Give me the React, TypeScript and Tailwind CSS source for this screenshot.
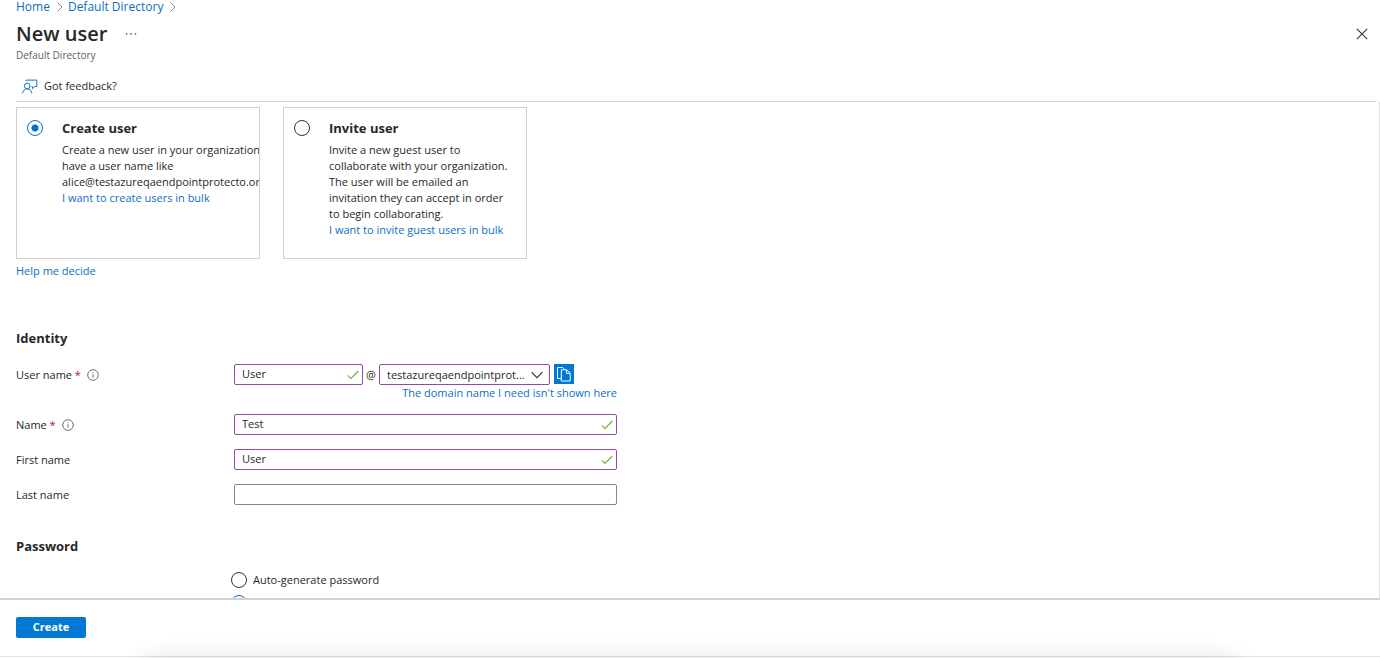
import { useState } from "react";
import type { ReactNode } from "react";

const linkClass = "text-[#0a70c2] hover:underline";

function Crumb({ children }: { children: ReactNode }) {
  return (
    <li className="flex items-center">
      <a href="#" className={linkClass}>
        {children}
      </a>
      <svg className="ml-1.5 h-2.5 w-2" viewBox="0 0 8 10" fill="none" stroke="#8a8886" aria-hidden="true">
        <path d="M1.5 .5 6 5 1.5 9.5" />
      </svg>
    </li>
  );
}

function FeedbackIcon() {
  return (
    <svg className="h-4 w-4" viewBox="0 0 16 16" fill="none" stroke="#1a73c7" strokeWidth="1" aria-hidden="true">
      <circle cx="5.2" cy="7" r="2.8" />
      <path d="M.6 14.400c.3-2.700 2.100-4.600 4.600-4.600s4.300 1.900 4.600 4.600" />
      <path d="M4.200 2.400V1.100H14.800V7.500H12.800L10.400 9.700V7.500H9.600" />
    </svg>
  );
}

function InfoIcon() {
  return (
    <svg className="h-3 w-3" viewBox="0 0 12 12" fill="none" stroke="#605e5c" strokeWidth=".9" aria-hidden="true">
      <circle cx="6" cy="6" r="5.300" />
      <path d="M6 5.200V8.800M6 3.200V4.200" />
    </svg>
  );
}

function CheckIcon() {
  return (
    <svg
      className="pointer-events-none absolute top-1.5 right-1 h-2.5 w-3"
      viewBox="0 0 12 10"
      fill="none"
      stroke="#6bb03c"
      strokeWidth="1.100"
      aria-hidden="true"
    >
      <path d="M.8 5.300 4 8.500 11.300 1" />
    </svg>
  );
}

function Radio(props: { id: string; name: string; checked: boolean; onChange: () => void }) {
  return (
    <input
      type="radio"
      {...props}
      className="h-4 w-4 shrink-0 appearance-none rounded-full border border-[#323130] bg-white checked:border-[#0f6cbd] checked:bg-[radial-gradient(circle,#0f6cbd_3px,transparent_4px)]"
    />
  );
}

function OptionCard(props: {
  id: string;
  title: string;
  checked: boolean;
  onChange: () => void;
  children: ReactNode;
}) {
  return (
    <div className="flex h-[152px] w-[244px] items-start overflow-hidden border border-[#d2d0ce] pt-3 pl-2.5">
      <Radio id={props.id} name="mode" checked={props.checked} onChange={props.onChange} />
      <div className="ml-[19px]">
        <label htmlFor={props.id} className="block text-[13px] leading-4 font-bold">
          {props.title}
        </label>
        <div className="mt-1.5 leading-4 whitespace-nowrap">{props.children}</div>
      </div>
    </div>
  );
}

function FieldLabel({ htmlFor, required, children }: { htmlFor: string; required?: boolean; children: ReactNode }) {
  return (
    <div className="flex h-[21px] items-center pt-0.5">
      <label htmlFor={htmlFor}>
        {children}
        {required && <span className="text-[#a4262c]"> *</span>}
      </label>
      {required && (
        <span className="ml-1.5">
          <InfoIcon />
        </span>
      )}
    </div>
  );
}

function TextField({ id, value, valid }: { id: string; value: string; valid?: boolean }) {
  const [text, setText] = useState(value);
  return (
    <div className="relative min-w-0 flex-1">
      <input
        id={id}
        type="text"
        value={text}
        onChange={(e) => setText(e.target.value)}
        className={`block h-[21px] w-full rounded-xs border bg-white px-[7px] pb-0.5 outline-none ${
          valid ? "border-[#8f4aa3]" : "border-[#8a8886]"
        }`}
      />
      {valid && <CheckIcon />}
    </div>
  );
}

export default function App() {
  const [mode, setMode] = useState("create");
  const [password, setPassword] = useState("custom");

  return (
    <div className="flex h-screen flex-col overflow-hidden bg-white font-['Open_Sans','Noto_Sans',sans-serif] text-[11px] text-[#292827]">
      <header className="shrink-0 pr-1 pl-4">
        <nav aria-label="Breadcrumb">
          <ol className="flex gap-1 text-[12px] leading-[14px]">
            <Crumb>Home</Crumb>
            <Crumb>Default Directory</Crumb>
          </ol>
        </nav>
        <div className="mt-1.5 flex h-7 items-center">
          <h1 className="text-[20px] leading-7 font-semibold">New user</h1>
          <button type="button" aria-label="More" className="ml-4 flex h-4 w-4 items-center justify-center">
            <svg className="h-1 w-3" viewBox="0 0 12 4" fill="#323130" aria-hidden="true">
              <circle cx="1.500" cy="2" r=".8" />
              <circle cx="6" cy="2" r=".8" />
              <circle cx="10.500" cy="2" r=".8" />
            </svg>
          </button>
          <button type="button" aria-label="Close" className="mr-2 ml-auto flex h-3 w-3 items-center justify-center">
            <svg className="h-3 w-3" viewBox="0 0 12 12" stroke="#323130" strokeWidth="1.100" aria-hidden="true">
              <path d="M.8 .8 11.200 11.200M11.200 .8 .8 11.200" />
            </svg>
          </button>
        </div>
        <p className="text-[10px] leading-[14px] text-[#605e5c]">Default Directory</p>
        <div className="mt-2 flex h-8 items-center border-b border-[#d6d6d6] pt-0.5 pl-1.5">
          <button type="button" className="flex items-center gap-1.5">
            <FeedbackIcon />
            Got feedback?
          </button>
        </div>
      </header>

      <main className="min-h-0 flex-1 overflow-hidden border-r border-[#e1dfdd] pt-[5px] pl-4">
        <div className="flex gap-[23px]">
          <OptionCard id="create" title="Create user" checked={mode === "create"} onChange={() => setMode("create")}>
            <p>
              Create a new user in your organization.
              <br />
              have a user name like
              <br />
              alice@testazureqaendpointprotecto.onmicrosoft.com.
            </p>
            <a href="#" className={linkClass}>
              I want to create users in bulk
            </a>
          </OptionCard>
          <OptionCard id="invite" title="Invite user" checked={mode === "invite"} onChange={() => setMode("invite")}>
            <p>
              Invite a new guest user to
              <br />
              collaborate with your organization.
              <br />
              The user will be emailed an
              <br />
              invitation they can accept in order
              <br />
              to begin collaborating.
            </p>
            <a href="#" className={linkClass}>
              I want to invite guest users in bulk
            </a>
          </OptionCard>
        </div>
        <a href="#" className={`mt-1 inline-block leading-4 ${linkClass}`}>
          Help me decide
        </a>

        <h2 className="mt-[50px] text-[13px] leading-4 font-bold">Identity</h2>
        <div className="mt-[18px] grid grid-cols-[218px_383px] gap-y-3.5">
          <FieldLabel htmlFor="user-name" required>
            User name
          </FieldLabel>
          <div>
            <div className="flex items-center">
              <div className="flex w-[129px]">
                <TextField id="user-name" value="User" valid />
              </div>
              <span className="w-4 pt-0.5 text-center">@</span>
              <div className="relative w-[171px]">
                <select
                  aria-label="Domain name"
                  className="block h-[21px] w-full appearance-none rounded-xs border border-[#8f4aa3] bg-white pt-0.5 pr-5 pl-[7px] outline-none"
                >
                  <option>testazureqaendpointprot...</option>
                </select>
                <svg
                  className="pointer-events-none absolute top-[7px] right-[7px] h-2 w-3"
                  viewBox="0 0 12 8"
                  fill="none"
                  stroke="#323130"
                  strokeWidth="1.100"
                  aria-hidden="true"
                >
                  <path d="M.6 1.200 6 6.600 11.400 1.200" />
                </svg>
              </div>
              <button
                type="button"
                aria-label="Copy"
                className="ml-1 flex h-5 w-5 items-center justify-center bg-[#0078d4]"
              >
                <svg className="h-4 w-4" viewBox="0 0 16 16" fill="none" stroke="#fff" strokeWidth="1" aria-hidden="true">
                  <path d="M5 12.500H1.500V1.500H6.800L8.700 3.400" />
                  <path d="M5.300 3.800H10.800L14.200 7.200V15H5.300ZM10.600 4V7.400H14" />
                </svg>
              </button>
            </div>
            <a href="#" className={`block text-right leading-[15px] ${linkClass}`}>
              The domain name I need isn't shown here
            </a>
          </div>

          <FieldLabel htmlFor="name" required>
            Name
          </FieldLabel>
          <TextField id="name" value="Test" valid />

          <FieldLabel htmlFor="first-name">First name</FieldLabel>
          <TextField id="first-name" value="User" valid />

          <FieldLabel htmlFor="last-name">Last name</FieldLabel>
          <TextField id="last-name" value="" />
        </div>

        <h2 className="mt-[33px] text-[13px] leading-4 font-bold">Password</h2>
        <div className="mt-[18px] ml-[215px] grid gap-[7px]">
          <div className="flex items-center gap-1.5">
            <Radio
              id="auto"
              name="password"
              checked={password === "auto"}
              onChange={() => setPassword("auto")}
            />
            <label htmlFor="auto" className="leading-4">
              Auto-generate password
            </label>
          </div>
          <div className="flex items-center gap-1.5">
            <Radio
              id="custom"
              name="password"
              checked={password === "custom"}
              onChange={() => setPassword("custom")}
            />
            <label htmlFor="custom" className="leading-4">
              Let me create the password
            </label>
          </div>
        </div>
      </main>

      <footer className="relative shrink-0 overflow-hidden border-t-2 border-[#d2d2d2] bg-white px-4 pt-[17px]">
        <button type="button" className="h-[21px] w-[70px] rounded-xs bg-[#0078d4] font-bold text-white">
          Create
        </button>
        <div className="-mx-4 mt-[18px] h-0.5 border-t border-[#e3e3e3]" />
        <div
          aria-hidden="true"
          className="pointer-events-none absolute right-36 -bottom-4 left-36 h-3 shadow-[0_0_24px_rgba(0,0,0,0.2)]"
        />
      </footer>
    </div>
  );
}
